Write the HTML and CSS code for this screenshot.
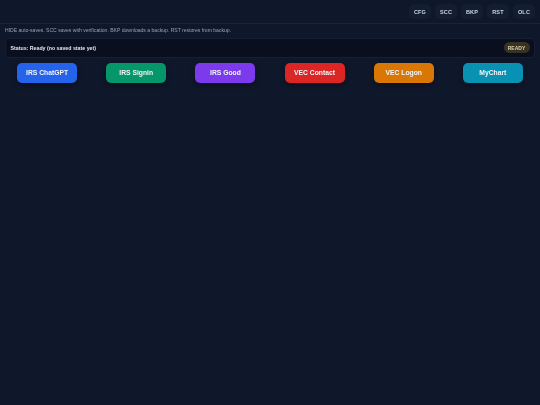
FILE: index.html
```html
<!DOCTYPE html>
<html lang="en">
<head>
    <meta charset="UTF-8">
    <meta name="viewport" content="width=device-width, initial-scale=1.0">
    <title>Launcher</title>
    <link rel="stylesheet" href="styles.css">
</head>
<body>

    <!-- Top toolbar -->
    <header class="toolbar">
        <button class="tool-button">CFG</button>
        <button class="tool-button">SCC</button>
        <button class="tool-button">BKP</button>
        <button class="tool-button">RST</button>
        <button class="tool-button">OLC</button>
    </header>

    <p class="hint">HIDE auto-saves. SCC saves with verification. BKP downloads a backup. RST restores from backup.</p>

    <!-- Status bar -->
    <div class="status-bar">
        <span class="status-text">Status: Ready (no saved state yet)</span>
        <span class="status-pill">READY</span>
    </div>

    <!-- Link buttons -->
    <nav class="links">
        <a class="link blue">IRS ChatGPT</a>
        <a class="link green">IRS Signin</a>
        <a class="link purple">IRS Good</a>
        <a class="link red">VEC Contact</a>
        <a class="link orange">VEC Logon</a>
        <a class="link cyan">MyChart</a>
    </nav>

</body>
</html>
```

FILE: styles.css
```css
* {
    margin: 0;
    padding: 0;
    box-sizing: border-box;
}

body {
    font-family: 'Liberation Sans', Arial, sans-serif;
    background-color: #0f172a;
    color: #e2e8f0;
    min-height: 100vh;
    filter: blur(0.4px); /* reference is a soft, downscaled capture */
}

.toolbar {
    display: flex;
    justify-content: flex-end;
    gap: 4px;
    height: 24px;
    padding: 4px 5px 0 0;
    border-bottom: 1px solid #1a2438;
}

.tool-button {
    width: 22px;
    height: 15px;
    font-family: inherit;
    font-size: 5.5px;
    font-weight: 700;
    letter-spacing: 0.2px;
    color: #cbd5e1;
    background-color: #131e33;
    border: none;
    border-radius: 5px;
}

.hint {
    font-size: 5.07px;
    line-height: 8px;
    color: #94a3b8;
    padding: 2px 0 0 5px;
}

.status-bar {
    display: flex;
    justify-content: space-between;
    align-items: center;
    height: 20px;
    margin: 3.5px 5px 0;
    padding: 0 4.5px;
    background-color: #090f1e;
    border: 1px solid #151f33;
    border-radius: 5px;
}

.status-text {
    font-size: 5.25px;
    font-weight: 700;
    color: #e2e8f0;
}

.status-pill {
    display: flex;
    align-items: center;
    justify-content: center;
    width: 26px;
    height: 11px;
    font-size: 5px;
    font-weight: 700;
    color: #d6d0b8;
    background-color: #38321f;
    border-radius: 6px;
}

.links {
    display: flex;
    justify-content: space-around;
    padding: 5px 2.5px 0;
}

.link {
    display: flex;
    align-items: center;
    justify-content: center;
    width: 60px;
    height: 20.5px;
    font-size: 6.75px;
    font-weight: 700;
    color: #f1f5f9;
    border-radius: 5px;
    box-shadow: 0 2px 5px rgba(0, 0, 0, 0.35);
}

.blue { background-color: #2563eb; }
.green { background-color: #059669; }
.purple { background-color: #7c3aed; }
.red { background-color: #dc2626; }
.orange { background-color: #d97706; }
.cyan { background-color: #0891b2; }
```
